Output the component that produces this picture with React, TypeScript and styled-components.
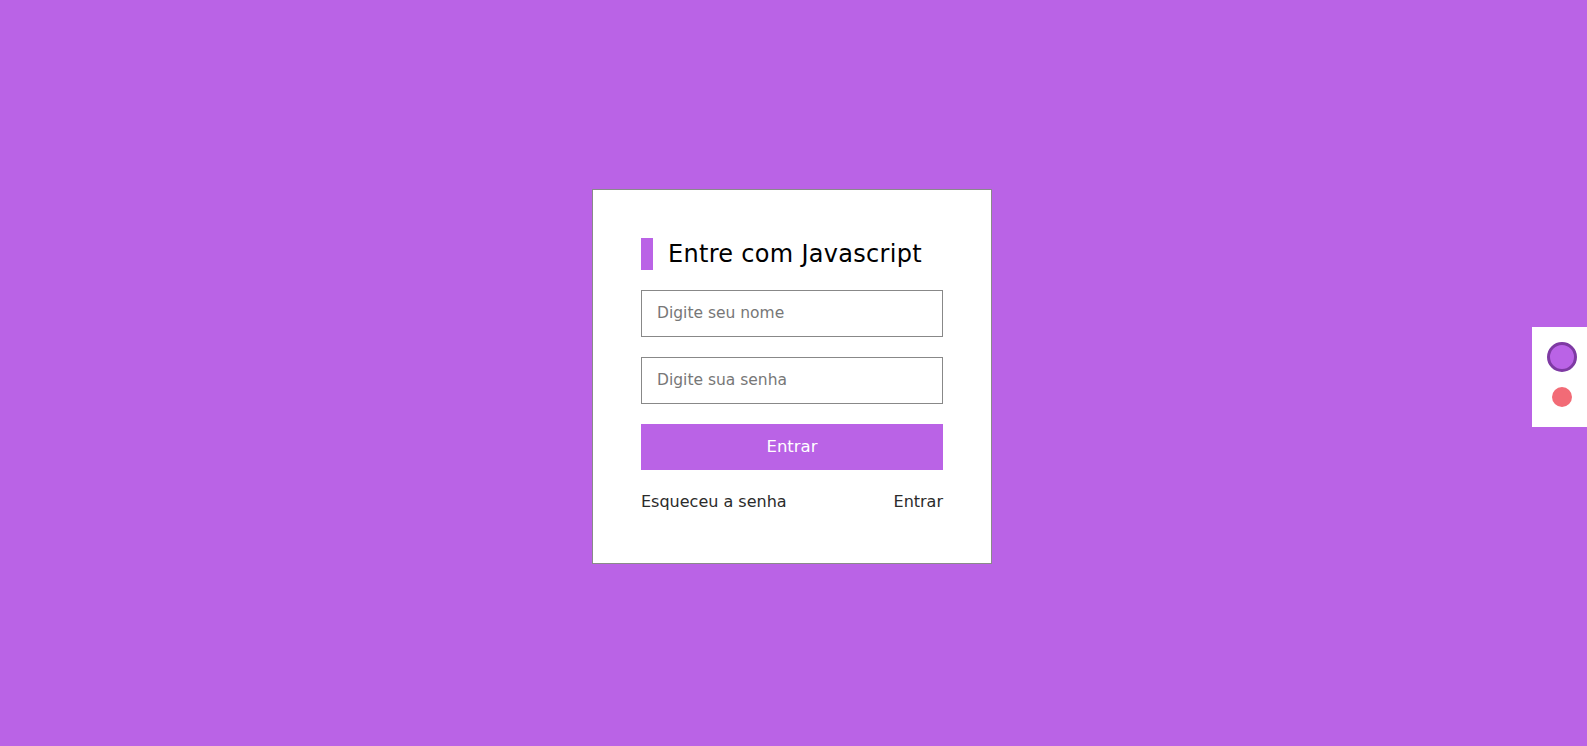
import React from "react";
import styled, { createGlobalStyle } from "styled-components";

const GlobalStyle = createGlobalStyle`
  * { box-sizing: border-box; }
  html, body { margin: 0; padding: 0; }
  body {
    background: #ba63e6;
    font-family: "DejaVu Sans", "Noto Sans", sans-serif;
  }
`;

const Page = styled.main`
  min-height: 100vh;
  padding: 6px 3px 0 0;
  display: flex;
  align-items: center;
  justify-content: center;
  background: #ba63e6;
`;

const Card = styled.form`
  width: 400px;
  height: 375px;
  background: #ffffff;
  border: 1px solid #8a8a8a;
  padding: 48px 48px 0 48px;
  display: flex;
  flex-direction: column;
`;

const TitleRow = styled.div`
  display: flex;
  align-items: center;
  gap: 15px;
  height: 32px;
  margin-bottom: 20px;
`;

const TitleBar = styled.span`
  width: 12px;
  height: 32px;
  background: #ba63e6;
`;

const Title = styled.h1`
  margin: 0;
  font-size: 24px;
  font-weight: 400;
  letter-spacing: 0.3px;
  color: #000;
`;

const Input = styled.input`
  width: 100%;
  height: 47px;
  border: 1px solid #888;
  padding: 0 15px;
  font-family: inherit;
  font-size: 15.5px;
  color: #333;
  margin-bottom: 20px;
  outline: none;
  &::placeholder { color: #777; }
`;

const Button = styled.button`
  width: 100%;
  height: 46px;
  border: none;
  background: #ba63e6;
  color: #fff;
  font-family: inherit;
  font-size: 16.5px;
  font-weight: 400;
  cursor: pointer;
`;

const LinksRow = styled.div`
  display: flex;
  justify-content: space-between;
  margin-top: 22px;
`;

const Link = styled.a`
  font-size: 16px;
  color: #2b2b2b;
  text-decoration: none;
`;

const Switcher = styled.div`
  position: fixed;
  right: 0;
  top: 327px;
  width: 55px;
  height: 100px;
  background: #fff;
  display: flex;
  flex-direction: column;
  align-items: center;
  padding: 15px 0 0 4px;
  gap: 15px;
`;

const Dot = styled.span<{ $color: string; $size: number; $ring?: string }>`
  display: block;
  width: ${(p) => p.$size}px;
  height: ${(p) => p.$size}px;
  border-radius: 50%;
  background: ${(p) => p.$color};
  border: ${(p) => (p.$ring ? `3px solid ${p.$ring}` : "none")};
`;

export default function App() {
  return (
    <>
      <GlobalStyle />
      <Page>
        <Card onSubmit={(e) => e.preventDefault()}>
          <TitleRow>
            <TitleBar />
            <Title>Entre com Javascript</Title>
          </TitleRow>
          <Input type="text" placeholder="Digite seu nome" />
          <Input type="password" placeholder="Digite sua senha" />
          <Button type="submit">Entrar</Button>
          <LinksRow>
            <Link href="#">Esqueceu a senha</Link>
            <Link href="#">Entrar</Link>
          </LinksRow>
        </Card>
      </Page>
      <Switcher>
        <Dot $color="#ba63e6" $size={30} $ring="#7e3aa3" />
        <Dot $color="#f26b76" $size={20} />
      </Switcher>
    </>
  );
}
